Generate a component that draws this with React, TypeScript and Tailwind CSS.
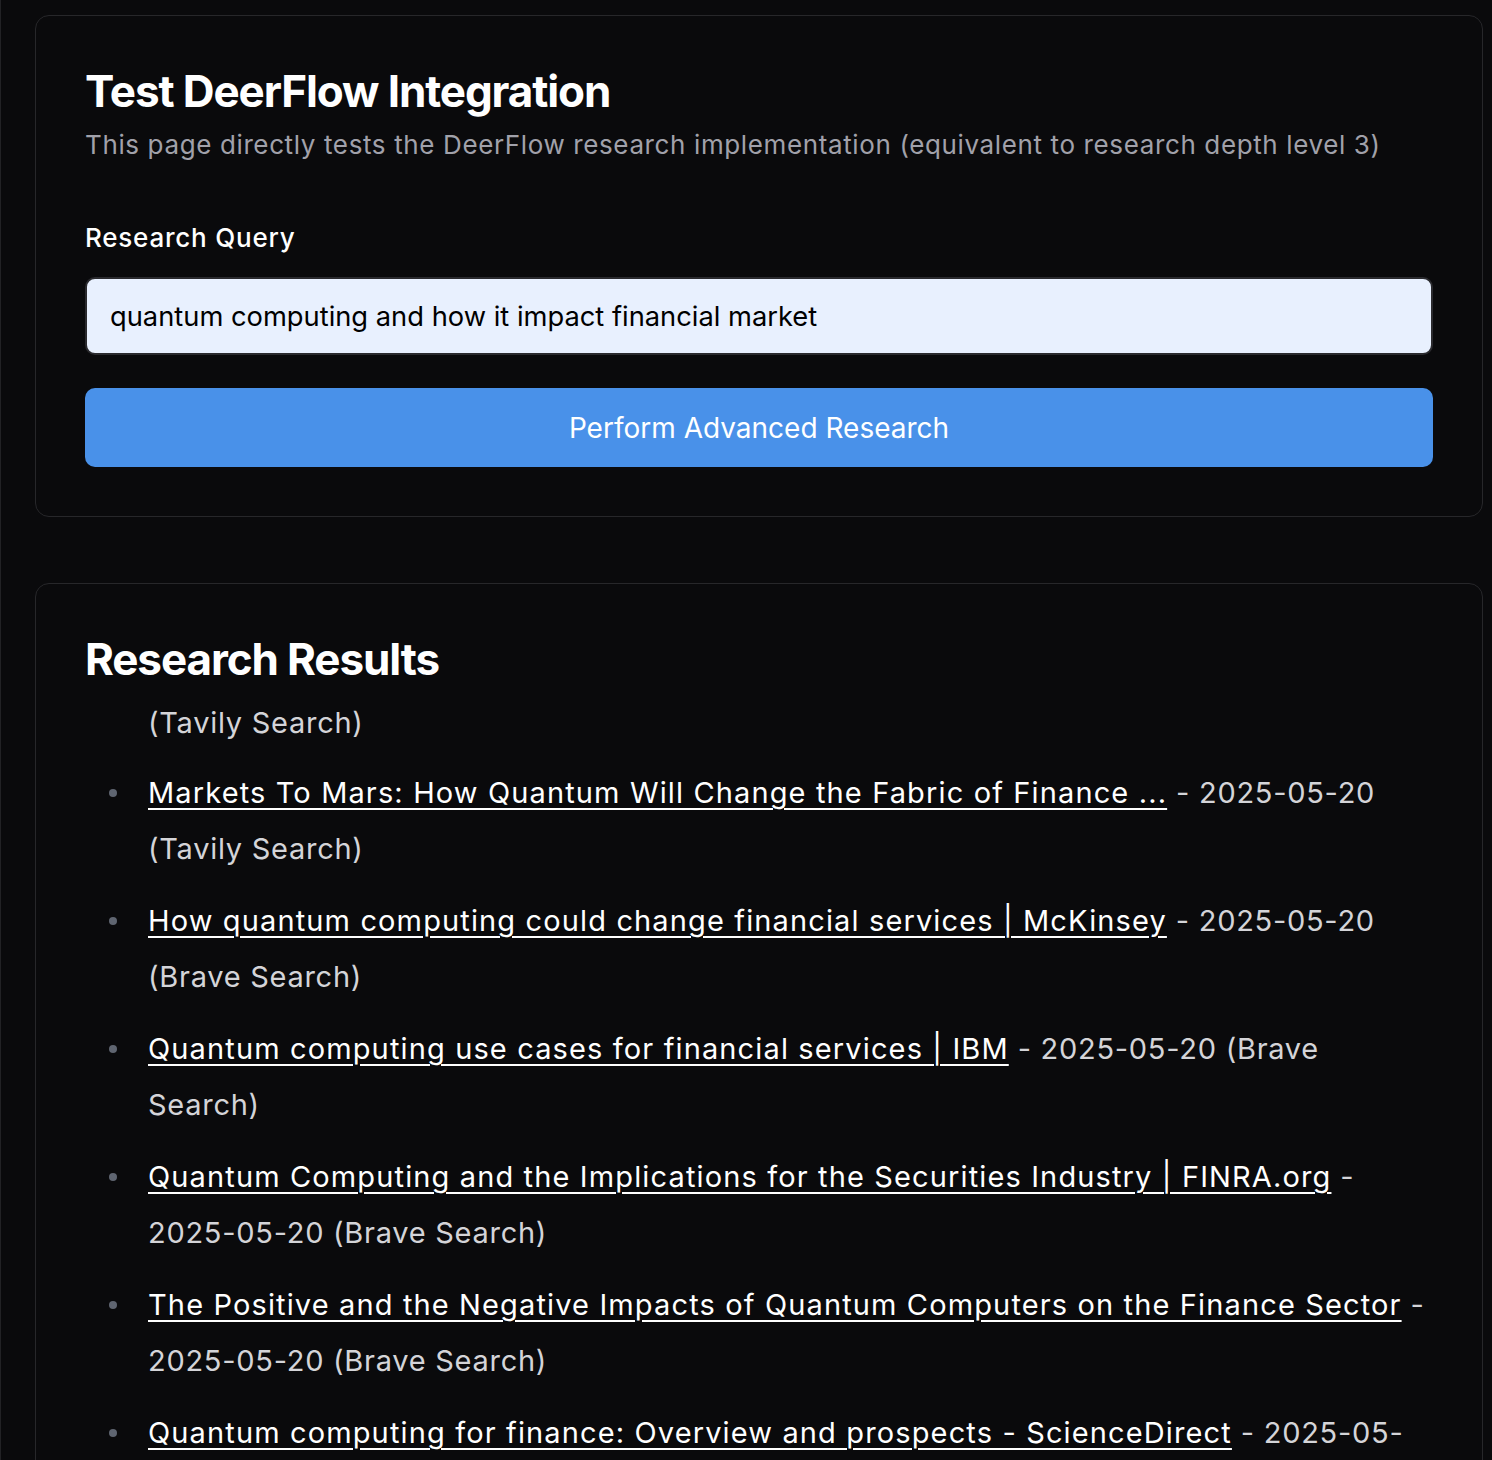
import React from "react";

const items: { title: string; l1: string; l2: string }[] = [
  {
    title: "Markets To Mars: How Quantum Will Change the Fabric of Finance ...",
    l1: " - 2025-05-20",
    l2: "(Tavily Search)",
  },
  {
    title: "How quantum computing could change financial services | McKinsey",
    l1: " - 2025-05-20",
    l2: "(Brave Search)",
  },
  {
    title: "Quantum computing use cases for financial services | IBM",
    l1: " - 2025-05-20 (Brave",
    l2: "Search)",
  },
  {
    title: "Quantum Computing and the Implications for the Securities Industry | FINRA.org",
    l1: " -",
    l2: "2025-05-20 (Brave Search)",
  },
  {
    title: "The Positive and the Negative Impacts of Quantum Computers on the Finance Sector",
    l1: " -",
    l2: "2025-05-20 (Brave Search)",
  },
  {
    title: "Quantum computing for finance: Overview and prospects - ScienceDirect",
    l1: " - 2025-05-",
    l2: "20 (Brave Search)",
  },
];

export default function App() {
  return (
    <div
      className="h-screen w-full bg-[#0a0a0c] border-l border-[#222225] pl-[34px] pr-[9px] pt-[15px] overflow-hidden"
      style={{ fontFamily: "Inter, 'Noto Sans', sans-serif" }}
    >
      <div className="rounded-[14px] border border-[#27272a] bg-[#0a0a0c] p-[49px]">
        <h1 className="text-[44px] leading-[52px] font-bold tracking-[-0.025em] text-white">
          Test DeerFlow Integration
        </h1>
        <p className="mt-[10px] text-[26px] leading-[36px] tracking-[0.024em] text-[#a1a1aa]">
          This page directly tests the DeerFlow research implementation (equivalent to research depth level 3)
        </p>
        <div className="mt-[57px] text-[26px] leading-[36px] tracking-[0.03em] font-medium text-white">Research Query</div>
        <div className="mt-[21px] h-[78px] rounded-[10px] border-2 border-[#2a2a2e] bg-[#e8f0fe] flex items-center pl-[23px] pt-[3px] text-[27.3px] text-black">
          quantum computing and how it impact financial market
        </div>
        <button className="mt-[33px] h-[79px] w-full rounded-[10px] bg-[#4991e9] text-[28px] text-white flex items-center justify-center">
          Perform Advanced Research
        </button>
      </div>

      <div className="mt-[66px] rounded-[14px] border border-[#27272a] bg-[#0a0a0c] px-[49px] pt-[49px] pb-[60px]">
        <h2 className="text-[44px] leading-[52px] font-bold tracking-[-0.025em] text-white">Research Results</h2>
        <div className="mt-[10px] pl-[63px] text-[29px] leading-[56px] tracking-[0.025em] text-[#d4d4d8]">
          (Tavily Search)
        </div>
        <ul className="mt-[14px] flex flex-col gap-[16px]">
          {items.map((it, i) => (
            <li key={i} className="flex text-[29px] leading-[56px] tracking-[0.025em]">
              <span className="ml-[24px] mr-[31px] mt-[24px] h-[8px] w-[8px] shrink-0 rounded-full bg-[#5f6571]" />
              <div className="whitespace-nowrap">
                <span className="text-white tracking-[0.039em] underline decoration-2 underline-offset-[5px]">
                  {it.title}
                </span>
                <span className="text-[#d4d4d8]">{it.l1}</span>
                <br />
                <span className="text-[#d4d4d8]">{it.l2}</span>
              </div>
            </li>
          ))}
        </ul>
      </div>
    </div>
  );
}
